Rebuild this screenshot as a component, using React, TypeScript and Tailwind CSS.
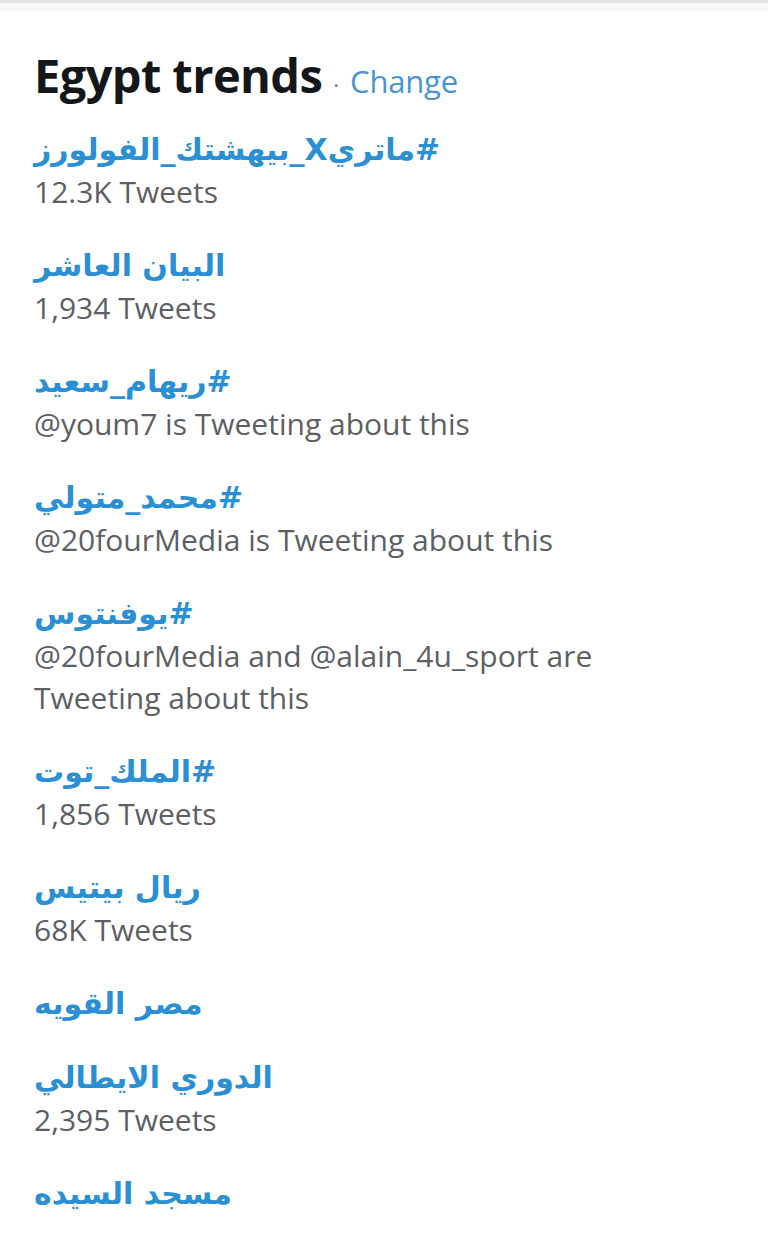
const trends: { name: string; meta?: string[] }[] = [
  { name: '#ماتريX_بيهشتك_الفولورز', meta: ['12.3K Tweets'] },
  { name: 'البيان العاشر', meta: ['1,934 Tweets'] },
  { name: '#ريهام_سعيد', meta: ['@youm7 is Tweeting about this'] },
  { name: '#محمد_متولي', meta: ['@20fourMedia is Tweeting about this'] },
  { name: '#يوفنتوس', meta: ['@20fourMedia and @alain_4u_sport are', 'Tweeting about this'] },
  { name: '#الملك_توت', meta: ['1,856 Tweets'] },
  { name: 'ريال بيتيس', meta: ['68K Tweets'] },
  { name: 'مصر القويه' },
  { name: 'الدوري الايطالي', meta: ['2,395 Tweets'] },
  { name: 'مسجد السيده' },
];

export default function App() {
  return (
    <div className="min-h-[1241px] w-[768px] bg-white font-['Open_Sans','DejaVu_Sans',sans-serif]">
      <div className="h-[3px] bg-[#e3e3e3]" />
      <div className="h-[8px] bg-[#f8f8f8]" />
      <div className="px-[34px] pt-[38px]">
        <div className="flex items-baseline h-[52px]">
          <h2 className="text-[47px] font-bold leading-[52px] tracking-[-0.6px] text-[#14171a]">Egypt trends</h2>
          <span className="mx-[11px] text-[22px] text-[#657786]">·</span>
          <a className="text-[31px] leading-[52px] tracking-[-0.2px] text-[#4a95cf]">Change</a>
        </div>
        <ul className="mt-[27px] flex flex-col gap-[31px]">
          {trends.map((t, i) => (
            <li key={i}>
              <div
                dir="rtl"
                className="w-fit text-left text-[30px] font-bold leading-[43px] text-[#2b8fd4] font-['DejaVu_Sans',sans-serif]"
              >
                {t.name}
              </div>
              {t.meta?.map((m, j) => (
                <div key={j} className="text-[30px] leading-[42px] text-[#5c5f63]">
                  {m}
                </div>
              ))}
            </li>
          ))}
        </ul>
      </div>
    </div>
  );
}
